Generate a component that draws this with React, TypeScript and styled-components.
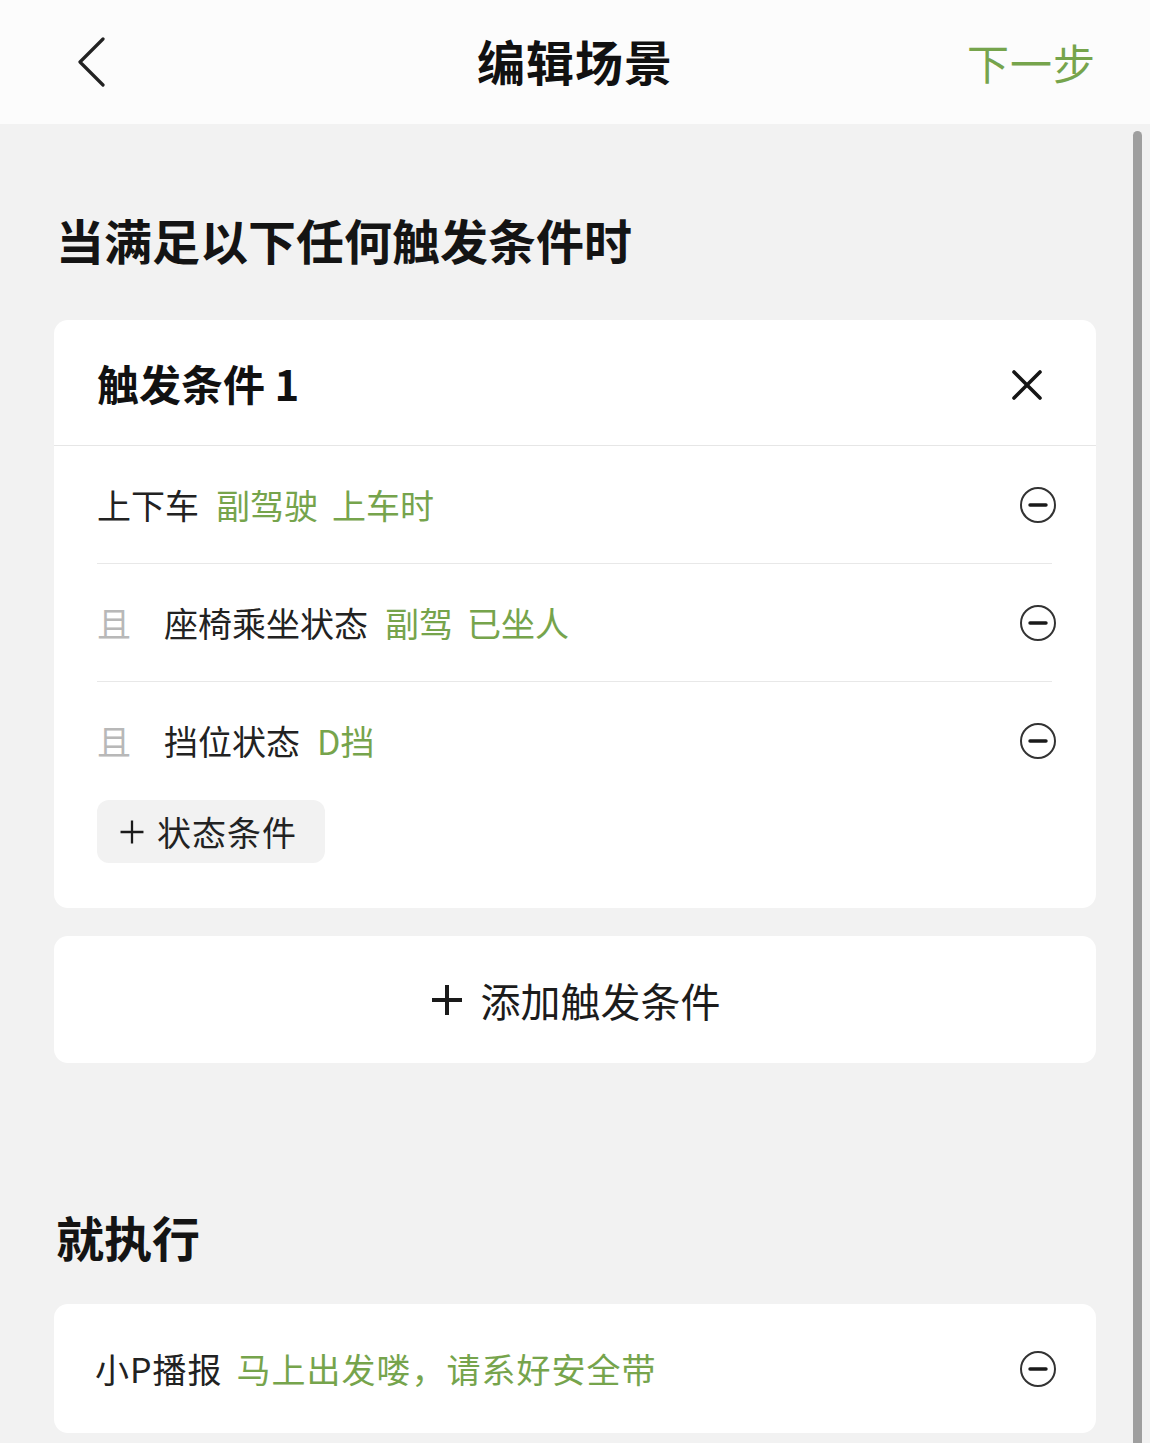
import React from "react";
import styled, { createGlobalStyle } from "styled-components";

const GREEN = "#76a44c";

const Global = createGlobalStyle`
  html, body { margin: 0; padding: 0; }
  body {
    background: #f2f2f2;
    font-family: "Noto Sans CJK SC", "Noto Sans", sans-serif;
    color: #1c1c1c;
  }
  * { box-sizing: border-box; }
`;

const Page = styled.div`
  width: 1150px;
  min-height: 1443px;
  background: #f2f2f2;
  position: relative;
  overflow: hidden;
`;

const Header = styled.header`
  height: 124px;
  background: #fcfcfc;
  display: grid;
  grid-template-columns: 1fr auto 1fr;
  align-items: center;
  padding: 0 54px;
`;

const BackBtn = styled.div`
  display: flex;
  align-items: center;
  height: 50px;
  margin-left: 22px;
`;

const Title = styled.h1`
  margin: 0 0 4px;
  text-align: center;
  font-size: 48px;
  font-weight: 700;
  letter-spacing: 1px;
  color: #111;
  line-height: 1;
`;

const NextBtn = styled.div`
  text-align: right;
  font-size: 42px;
  letter-spacing: 1px;
  color: ${GREEN};
  line-height: 1;
`;

const Main = styled.main`
  padding: 0 54px;
  display: flex;
  flex-direction: column;
`;

const SectionTitle = styled.h2<{ $top: number; $bottom: number }>`
  margin: ${(p) => p.$top}px 0 ${(p) => p.$bottom}px 2px;
  font-size: 48px;
  line-height: 68px;
  font-weight: 700;
  color: #141414;
`;

const Card = styled.section`
  background: #fff;
  border-radius: 14px;
  overflow: hidden;
`;

const CardHeader = styled.div`
  height: 126px;
  display: flex;
  align-items: center;
  justify-content: space-between;
  padding: 0 53px 0 43px;
  border-bottom: 1px solid #e6e6e6;
`;

const CardTitle = styled.div`
  font-size: 42px;
  font-weight: 700;
  color: #111;
  line-height: 1;
`;

const Rows = styled.div`
  padding: 0 40px 45px 43px;
`;

const Row = styled.div<{ $divider?: boolean }>`
  height: 118px;
  display: flex;
  align-items: center;
  position: relative;
  ${(p) =>
    p.$divider
      ? `&::after {
    content: "";
    position: absolute;
    left: 0;
    right: 4px;
    bottom: 0;
    height: 1px;
    background: #e8e8e8;
  }`
      : ""}
`;

const RowText = styled.div<{ $spacing?: number }>`
  flex: 1;
  display: flex;
  align-items: center;
  font-size: 34px;
  line-height: 1;
  color: #222;
  letter-spacing: ${(p) => p.$spacing ?? 0}px;
`;

const And = styled.span`
  color: #b8b8b8;
  width: 67px;
`;

const Value = styled.span<{ $gap?: number }>`
  color: ${GREEN};
  margin-left: ${(p) => p.$gap ?? 17}px;
  display: inline-flex;
  gap: 14px;
`;

const AddState = styled.button`
  height: 63px;
  border: none;
  background: #f2f2f2;
  border-radius: 12px;
  display: inline-flex;
  align-items: center;
  gap: 12px;
  padding: 0 28px 0 22px;
  font-family: inherit;
  font-size: 34px;
  letter-spacing: 1px;
  color: #222;
  line-height: 1;
`;

const AddTrigger = styled.div`
  height: 127px;
  margin-top: 28px;
  background: #fff;
  border-radius: 14px;
  display: flex;
  align-items: center;
  justify-content: center;
  gap: 17px;
  font-size: 40px;
  color: #1c1c1c;
  line-height: 1;
`;

const ActionCard = styled.section`
  height: 129px;
  background: #fff;
  border-radius: 14px;
  display: flex;
  align-items: center;
  padding: 0 40px 0 41px;
`;

const Scrollbar = styled.div`
  position: absolute;
  left: 1133px;
  top: 131px;
  width: 9px;
  bottom: -10px;
  background: #9f9f9f;
  border-radius: 5px;
`;

const Chevron = () => (
  <svg width="32" height="50" viewBox="0 0 32 50">
    <path d="M27 2 L4 25 L27 48" fill="none" stroke="#222" strokeWidth="3.2" strokeLinecap="round" strokeLinejoin="round" />
  </svg>
);

const Close = () => (
  <svg width="32" height="32" viewBox="0 0 32 32" style={{ marginTop: 4 }}>
    <path d="M3 3 L29 29 M29 3 L3 29" stroke="#151515" strokeWidth="3.6" strokeLinecap="round" />
  </svg>
);

const MinusCircle = () => (
  <svg width="38" height="38" viewBox="0 0 38 38" style={{ marginRight: -1 }}>
    <circle cx="19" cy="19" r="17" fill="none" stroke="#333" strokeWidth="2" />
    <path d="M11 19 H27" stroke="#1a1a1a" strokeWidth="3.4" strokeLinecap="round" />
  </svg>
);

const Plus = ({ size, w }: { size: number; w: number }) => (
  <svg width={size} height={size} viewBox="0 0 34 34">
    <path d="M17 2 V32 M2 17 H32" stroke="#1a1a1a" strokeWidth={w} strokeLinecap="butt" />
  </svg>
);

export default function App() {
  return (
    <Page>
      <Global />
      <Header>
        <BackBtn>
          <Chevron />
        </BackBtn>
        <Title>编辑场景</Title>
        <NextBtn>下一步</NextBtn>
      </Header>
      <Main>
        <SectionTitle $top={81} $bottom={47}>当满足以下任何触发条件时</SectionTitle>
        <Card>
          <CardHeader>
            <CardTitle>触发条件 1</CardTitle>
            <Close />
          </CardHeader>
          <Rows>
            <Row $divider>
              <RowText>
                上下车
                <Value>
                  <span>副驾驶</span>
                  <span>上车时</span>
                </Value>
              </RowText>
              <MinusCircle />
            </Row>
            <Row $divider>
              <RowText>
                <And>且</And>座椅乘坐状态
                <Value>
                  <span>副驾</span>
                  <span>已坐人</span>
                </Value>
              </RowText>
              <MinusCircle />
            </Row>
            <Row>
              <RowText>
                <And>且</And>挡位状态<Value>D挡</Value>
              </RowText>
              <MinusCircle />
            </Row>
            <AddState>
              <Plus size={26} w={3} />
              状态条件
            </AddState>
          </Rows>
        </Card>
        <AddTrigger>
          <Plus size={34} w={4} />
          添加触发条件
        </AddTrigger>
        <SectionTitle $top={139} $bottom={34}>就执行</SectionTitle>
        <ActionCard>
          <RowText $spacing={1}>
            小P播报<Value $gap={14}>马上出发喽，请系好安全带</Value>
          </RowText>
          <MinusCircle />
        </ActionCard>
      </Main>
      <Scrollbar />
    </Page>
  );
}
